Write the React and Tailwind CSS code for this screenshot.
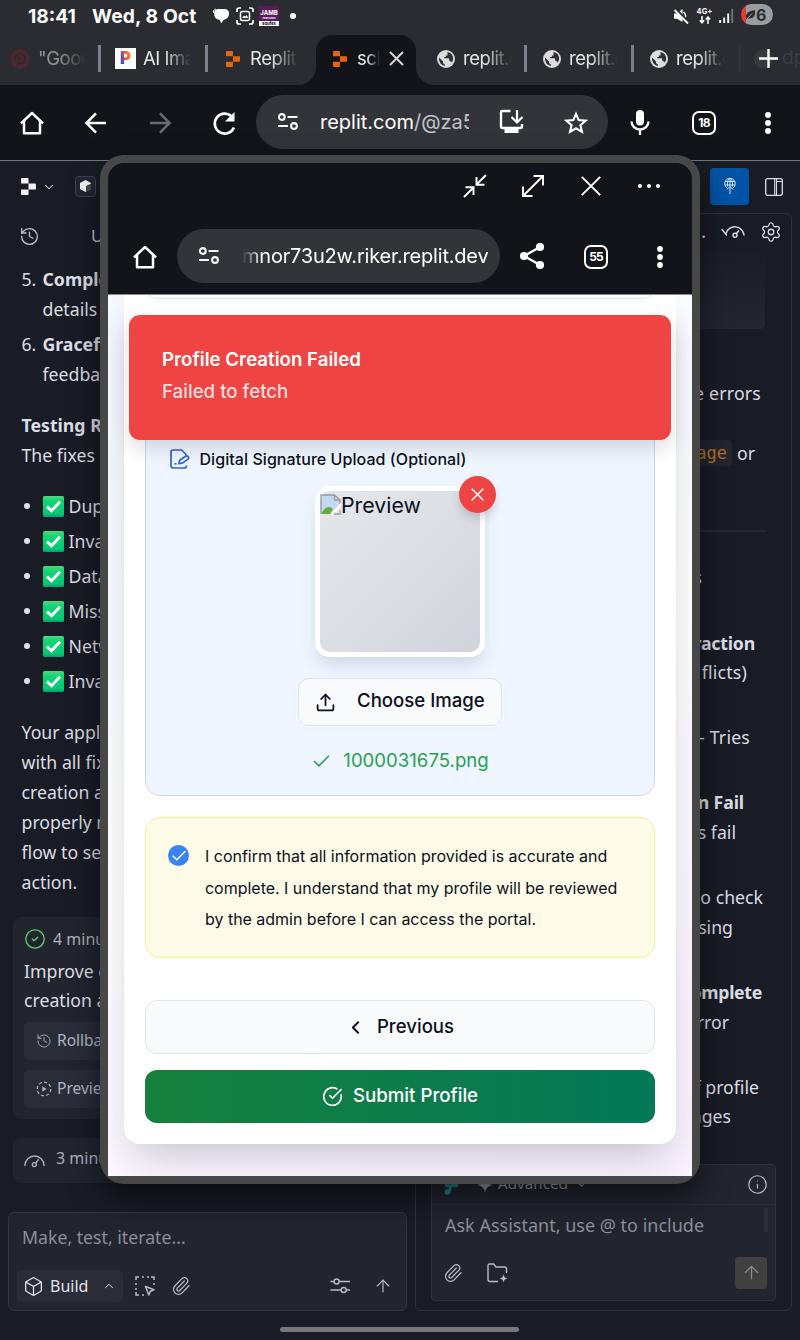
import React from "react";
import {
  History, Check, ChevronDown, ChevronUp, ChevronLeft, Paperclip, ArrowUp, Settings,
  X, Info, Upload, CircleCheckBig, CircleCheck, Box,
} from "lucide-react";
import { FaPinterest } from "react-icons/fa";

/* ---------- icons ---------- */
function Svg({ w, h, vb, className = "", children }) {
  return (
    <svg width={w} height={h} viewBox={vb || `0 0 ${w} ${h}`} fill="none" className={`shrink-0 ${className}`}>
      {children}
    </svg>
  );
}

const HomeIcon = () => (
  <Svg w={26} h={26}>
    <path d="M2 13.4 13 3l11 10.4M5 11v12.2h16V11" stroke="#fff" strokeWidth="2.5" strokeLinejoin="round" />
  </Svg>
);
const TuneIcon = () => (
  <Svg w={22} h={20}>
    <g stroke="#f4f4f6" strokeWidth="2.1">
      <circle cx="4.8" cy="5" r="2.9" />
      <path d="M10.5 5h10M1 14h10" />
      <circle cx="17" cy="14" r="2.9" />
    </g>
  </Svg>
);
const DotsV = () => (
  <Svg w={8} h={26}>
    <circle cx="4" cy="5" r="2.9" fill="#fff" />
    <circle cx="4" cy="13" r="2.9" fill="#fff" />
    <circle cx="4" cy="21" r="2.9" fill="#fff" />
  </Svg>
);
const Arrow = ({ flip, color }) => (
  <Svg w={24} h={24}>
    <path
      d={flip ? "M2 12h19M12 2.3 21.6 12 12 21.7" : "M22 12H3M12 2.3 2.4 12 12 21.7"}
      stroke={color}
      strokeWidth="2.5"
    />
  </Svg>
);
const ReloadIcon = () => (
  <Svg w={26} h={26}>
    <path d="M23 17.5A10 10 0 1 1 20.5 6.2" stroke="#fff" strokeWidth="2.6" />
    <path d="M23.5 2v9.5H14z" fill="#fff" />
  </Svg>
);
const TabCount = ({ n }) => (
  <div className="flex h-[24px] w-[24px] items-center justify-center rounded-[7px] border-[2.4px] border-white pt-px text-[12px] font-bold leading-none tracking-[-0.8px] text-white">
    {n}
  </div>
);
const ReplitMark = ({ color, w = 14, h = 16 }) => (
  <Svg w={w} h={h} vb="0 0 14 16">
    <path
      d="M0 .8Q0 0 .8 0H6.2Q7 0 7 .8V5.2H0zM7 5.2H13.2Q14 5.2 14 6V10Q14 10.8 13.2 10.8H7zM0 10.8H7V15.2Q7 16 6.2 16H.8Q0 16 0 15.2z"
      fill={color}
    />
  </Svg>
);
const Globe = () => (
  <Svg w={18} h={18}>
    <circle cx="9" cy="9" r="9" fill="#dcdcde" />
    <path
      d="M10.500 1.900q2.500.300 4.200 2.300 1.700 2.200 1.400 5-.300 2-1.300 3.400-.800-1.800-2.300-1.700l-.700-2.600H7.200V7h1.600V5.400h1.700zM2 7.600l4 4v1.200q.300 1.300 1.800 1.500v1.700q-2.900-.500-4.600-2.900Q1.500 10.600 2 7.600z"
      fill="#2f3136"
    />
  </Svg>
);
const GaugeIcon = () => (
  <Svg w={21} h={14}>
    <g stroke="currentColor" strokeWidth="1.4" strokeLinecap="round">
      <path d="M1 11.500A9.500 9.500 0 0 1 20 11.500" />
      <circle cx="10.300" cy="10.600" r="2" />
      <path d="M11.700 9.100 14.300 5.800" />
    </g>
  </Svg>
);
const Emoji = () => (
  <Svg w={21} h={21} className="mr-[5px]">
    <defs>
      <linearGradient id="emojiGreen" x1="0" y1="0" x2="0" y2="1">
        <stop offset="0" stopColor="#4fd97a" />
        <stop offset="0.25" stopColor="#10d574" />
        <stop offset="0.85" stopColor="#06c673" />
        <stop offset="1" stopColor="#079b78" />
      </linearGradient>
    </defs>
    <rect width="21" height="21" rx="1.500" fill="url(#emojiGreen)" />
    <path d="M4 10.700 8.500 14.700 17 5.700" stroke="#fff" strokeWidth="2.900" />
  </Svg>
);
const FadeText = ({ children, className = "" }) => (
  <span
    className={`mb-[2px] overflow-hidden whitespace-nowrap text-[18.5px] leading-[26px] tracking-[-0.45px] text-[#e4e4e6] [mask-image:linear-gradient(to_right,black_45%,transparent)] ${className}`}
  >
    {children}
  </span>
);
const TabDivider = ({ className = "bg-[#7d808c]" }) => <div className={`h-[27px] w-[3px] shrink-0 ${className}`} />;

/* ---------- phone browser chrome ---------- */
function StatusBar() {
  return (
    <div className="flex h-[35px] items-center bg-[#2b2c31] pb-[3px] pl-[28px] pr-[27px] text-white">
      <span className="w-[64px] whitespace-nowrap text-[19.3px] font-bold">18:41</span>
      <span className="w-[121px] whitespace-nowrap text-[19.3px] font-bold tracking-[0.1px]">Wed, 8 Oct</span>
      <Svg w={17} h={16}>
        <path d="M5 1h7q4 .5 4 4.500 0 5-5.500 6.500L8 15.500 7 12Q1 11 1 5.500 1 1.500 5 1z" fill="#fff" />
        <path d="M.500 5V2.500L3 .800" stroke="#fff" />
      </Svg>
      <Svg w={18} h={18} className="ml-[6px]">
        <path d="M1 5V3q0-2 2-2h2M13 1h2q2 0 2 2v2M17 13v2q0 2-2 2h-2M5 17H3q-2 0-2-2v-2" stroke="#fff" strokeWidth="1.700" />
        <rect x="4.500" y="4.500" width="9" height="9" rx="2" stroke="#fff" strokeWidth="1.500" />
        <path d="m6 11 2-2.500 1.500 1 1-1.500 1.800 3z" fill="#fff" />
      </Svg>
      <div className="ml-[5px] flex h-[20px] w-[20px] shrink-0 flex-col items-center bg-[#5a1d5c] pt-[4px] font-bold leading-none">
        <span className="text-[6px] leading-[6px]">JAMB</span>
        <span className="text-[2.5px] leading-[5px]">PREPARED</span>
        <span className="h-[5px] w-full bg-white text-center text-[4px] leading-[5px] text-black">Edufex</span>
      </div>
      <div className="ml-[11px] h-[6px] w-[6px] rounded-full bg-white" />
      <div className="flex-1" />
      <Svg w={17} h={17}>
        <path d="M1 5.500h3L9.500 1v13L4 10.800H1z" fill="#fff" />
        <path d="M10.500 4q3 2.500 1.500 6" stroke="#fff" strokeWidth="1.600" />
        <path d="M2.500 1 16 14.500" stroke="#2b2c31" strokeWidth="2.500" />
        <path d="M1.500 2 15 15.500" stroke="#fff" strokeWidth="1.800" />
      </Svg>
      <div className="ml-[6px] mr-[6px] flex w-[17px] flex-col items-center">
        <span className="text-[7.5px] font-bold leading-[8px]">4G+</span>
        <Svg w={12} h={8}>
          <path d="M3 0v6.500M.800 4.300 3 6.800l2.200-2.500M9 8V1M6.800 3.500 9 1l2.200 2.500" stroke="#fff" strokeWidth="1.500" />
        </Svg>
      </div>
      <Svg w={15} h={16}>
        <path d="M1.200 12v3M5.200 9.500V15M9.200 5.500V15" stroke="#fff" strokeWidth="1.900" />
        <path d="M13.200 1v14" stroke="#6f7075" strokeWidth="1.900" />
      </Svg>
      <div className="mb-[3px] ml-[7px] flex h-[21px] w-[32px] items-center overflow-hidden rounded-full bg-[linear-gradient(90deg,#e23b30_5px,#9b9c9f_5px)] pl-[4px]">
        <Svg w={11} h={11}>
          <path d="M1 9Q0 2 10 1q1 9-6 8.500L1 10.500" fill="#2c2d31" />
          <path d="M2 10 7 4.500" stroke="#9b9c9f" />
        </Svg>
        <span className="text-[16px] font-bold leading-none text-[#2c2d31]">6</span>
      </div>
    </div>
  );
}

function TabStrip() {
  return (
    <div className="flex h-[50px] bg-[#131419]">
      <div className="flex w-[316px] items-center rounded-br-[18px] bg-[#2b2c31] pb-[3px]">
        <div className="flex w-[98px] items-center pl-[10px]">
          <FaPinterest size={20} className="shrink-0 text-[#51272f]" />
          <FadeText className="ml-[8px] w-[48px] opacity-55">"Gooc</FadeText>
        </div>
        <TabDivider />
        <div className="flex w-[104px] items-center pl-[14px]">
          <div className="flex h-[21px] w-[21px] items-center justify-center bg-white">
            <span className="bg-[linear-gradient(75deg,#3b4ed0_22%,#e2574a_50%,#f59a2f)] bg-clip-text text-[17px] font-black leading-none text-transparent">
              P
            </span>
          </div>
          <FadeText className="ml-[7px] w-[48px]">AI Ima</FadeText>
        </div>
        <TabDivider />
        <div className="flex items-center pl-[18px]">
          <ReplitMark color="#e8650d" />
          <FadeText className="ml-[10px] w-[48px]">Replit</FadeText>
        </div>
      </div>
      <div className="w-[100px] bg-[#2b2c31]">
        <div className="flex h-full items-center rounded-t-[16px] bg-[#131419] pb-[3px] pl-[17px]">
          <ReplitMark color="#e8650d" />
          <FadeText className="ml-[10px] w-[23px]">scl</FadeText>
          <Svg w={15} h={15} className="ml-[9px]">
            <path d="m1 1 13 13M14 1 1 14" stroke="#d6d6d9" strokeWidth="2" />
          </Svg>
        </div>
      </div>
      <div className="flex flex-1 items-center overflow-hidden rounded-bl-[18px] bg-[#2b2c31] pb-[3px]">
        <div className="flex w-[108px] shrink-0 items-center pl-[21px]">
          <Globe />
          <FadeText className="ml-[8px] w-[49px]">replit.c</FadeText>
        </div>
        <TabDivider />
        <div className="flex w-[104px] shrink-0 items-center pl-[16px]">
          <Globe />
          <FadeText className="ml-[8px] w-[49px]">replit.c</FadeText>
        </div>
        <TabDivider />
        <div className="flex w-[104px] shrink-0 items-center pl-[16px]">
          <Globe />
          <FadeText className="ml-[8px] w-[49px]">replit.c</FadeText>
        </div>
        <TabDivider className="bg-[#323339]" />
        <div className="flex items-center pl-[13px]">
          <div className="flex h-[20px] w-[28px] items-center justify-center rounded-full bg-[radial-gradient(circle_at_9px_10px,#37383d_9px,transparent_10px)]">
            <Svg w={19} h={19}>
              <path d="M9.500 0v19M0 9.500h19" stroke="#fff" strokeWidth="2.400" />
            </Svg>
          </div>
          <span className="whitespace-nowrap text-[19px] text-[#3d3e43]">dp</span>
        </div>
      </div>
    </div>
  );
}

function MainToolbar() {
  return (
    <div className="flex h-[76px] items-center border-b border-[#77787d] bg-[#131419] text-white">
      {[<HomeIcon />, <Arrow color="#fff" />, <Arrow flip color="#6a6b70" />, <ReloadIcon />].map((ic, i) => (
        <div key={i} className="flex w-[64px] justify-center">{ic}</div>
      ))}
      <div className="mt-[-2px] flex h-[54px] w-[352px] items-center rounded-full bg-[#333439] pl-[21px]">
        <TuneIcon />
        <span className="ml-[21px] w-[149px] overflow-hidden whitespace-nowrap text-[20px]">
          replit.com<span className="text-[#c3c2cd]">/@za5</span>
        </span>
        <Svg w={25} h={26} className="ml-[30px]">
          <path d="M11.500 2H3.200Q2 2 2 3.200v14.600Q2 19 3.200 19h18.600Q23 19 23 17.800V15" stroke="#fff" strokeWidth="2.400" />
          <path d="M5.500 19.500h14V24h-14z" fill="#fff" />
          <path d="M18 1v12M12.500 8l5.500 5.500L23.500 8" stroke="#fff" strokeWidth="2.200" />
        </Svg>
        <Svg w={24} h={24} className="ml-[40px] mt-[2px]">
          <path
            d="m12 2.800 2.700 6.300 6.900.6-5.200 4.500 1.600 6.700-6-3.600-6 3.600 1.600-6.700L2.400 9.700l6.900-.6z"
            stroke="#fff"
            strokeWidth="2.100"
          />
        </Svg>
      </div>
      <div className="flex w-[64px] justify-center">
        <Svg w={20} h={27}>
          <rect x="6" y="1" width="8" height="15.500" rx="4" fill="#fff" />
          <path d="M1.500 12.500a8.500 8 0 0 0 17 0M10 20.500V26" stroke="#fff" strokeWidth="2.300" />
        </Svg>
      </div>
      <div className="flex w-[64px] justify-center"><TabCount n="18" /></div>
      <div className="flex w-[64px] justify-center"><DotsV /></div>
    </div>
  );
}

/* ---------- workspace behind the window ---------- */
function CheckItem({ children }) {
  return (
    <li className="flex h-[30px] items-center whitespace-nowrap">
      <span className="ml-[2px] mr-[13px] h-[6px] w-[6px] rounded-full bg-[#dfe1e8]" />
      <Emoji />
      {children}
    </li>
  );
}

function AgentPane() {
  return (
    <div className="flex w-[415px] flex-col text-[#dcdee6]">
      <div className="flex h-[50px] items-center pl-[21px]">
        <ReplitMark color="#f0f1f4" w={15} h={17} />
        <ChevronDown size={14} strokeWidth={1.800} className="ml-[6px] mt-[2px]" />
        <div className="ml-[19px] flex h-[21px] w-[21px] items-center justify-center rounded-[4px] border border-[#40434f] bg-[#23262f]">
          <Svg w={11} h={12}>
            <path d="M5.500 0 11 3v6L5.500 12 0 9V3z" fill="#f3f4f4" />
            <path d="M6 6 11 3.500V9L6 12z" fill="#3e5248" />
          </Svg>
        </div>
      </div>
      <div className="flex h-[50px] items-center pl-[19px] text-[#bfc2cc]">
        <History size={21} strokeWidth={1.500} />
        <span className="ml-[51px] text-[17px]">U</span>
      </div>
      <div className="mt-[3px] flex flex-col pl-[21.500px] text-[17.700px] leading-[30px]">
        <ol className="flex flex-col gap-[5px]">
          <li className="flex">
            <span className="w-[21px]">5.</span>
            <div><b className="font-bold">Comple</b><br />details</div>
          </li>
          <li className="flex">
            <span className="w-[21px]">6.</span>
            <div><b className="font-bold">Graceful</b><br />feedback</div>
          </li>
        </ol>
        <p className="mt-[21px] whitespace-nowrap"><b>Testing Re</b><br />The fixes</p>
        <ul className="mt-[21px] flex flex-col gap-[5px]">
          <CheckItem>Dupl</CheckItem>
          <CheckItem>Inval</CheckItem>
          <CheckItem>Data</CheckItem>
          <CheckItem>Missi</CheckItem>
          <CheckItem>Netw</CheckItem>
          <CheckItem>Inval</CheckItem>
        </ul>
        <p className="mt-[22px] whitespace-nowrap leading-[29.900px]">
          Your appli<br />with all fix<br />creation an<br />properly m<br />flow to sen<br />action.
        </p>
      </div>
      <div className="ml-[13px] mt-[19.600px] flex h-[202px] w-[394px] flex-col rounded-[8px] bg-[#22252e] px-[11px] pt-[11px]">
        <div className="flex h-[22px] items-center text-[16px] text-[#adb0bb]">
          <CircleCheck size={22} strokeWidth={1.500} className="mr-[7px] text-[#62c876]" />4 minut
        </div>
        <p className="mt-[7px] whitespace-nowrap text-[17.700px] leading-[29px]">Improve er<br />creation an</p>
        <div className="mt-[7px] flex h-[38px] items-center rounded-[5px] bg-[#2a2d38] pl-[12px] text-[15.500px] text-[#b2b5c0]">
          <History size={16} strokeWidth={1.400} strokeDasharray="5 1.500" className="mr-[5px]" />Rollbac
        </div>
        <div className="mt-[10px] flex h-[38px] items-center rounded-[5px] bg-[#2a2d38] pl-[12px] text-[15.500px] text-[#b2b5c0]">
          <Svg w={16} h={16} className="mr-[5px]">
            <circle cx="8" cy="8" r="6.800" stroke="currentColor" strokeWidth="1.200" strokeDasharray="3.200 2.100" />
            <path d="M6.300 5.300v5.400L10.500 8z" fill="currentColor" />
          </Svg>
          Preview
        </div>
      </div>
      <div className="ml-[13px] mt-[19px] flex h-[45px] w-[394px] items-center rounded-[8px] bg-[#22252e] pb-[5px] pl-[11px] text-[16px] text-[#adb0bb]">
        <span className="mr-[11px] mt-[5px]"><GaugeIcon /></span>3 minut
      </div>
      <div className="ml-[8px] mt-[29px] flex h-[99px] w-[399px] flex-col rounded-[6px] border border-[#343743] bg-[#22252e]">
        <p className="ml-[13px] mt-[11px] text-[17.700px] leading-[26px] text-[#8b8e9b]">Make, test, iterate...</p>
        <div className="mt-[20px] flex h-[32px] items-center text-[#b9bcc7]">
          <div className="ml-[8px] flex h-[32px] w-[106px] items-center rounded-[5px] bg-[#2a2d38] pl-[6px] text-[16px] text-[#e0e2e9]">
            <Box size={21} strokeWidth={1.500} className="mr-[6px]" />
            <span className="mb-px w-[52px]">Build</span>
            <ChevronUp size={14} strokeWidth={1.700} />
          </div>
          <Svg w={20} h={20} className="ml-[12px]">
            <path d="M1 4V1h3M7 1h2M12 1h2M16 1h3v3M19 7v2M1 7v2M1 12v2M1 16v3h3M7 19h2" stroke="currentColor" strokeWidth="1.500" />
            <path d="m10.500 10.500 8.500 3.300-3.700 1.500-1.500 3.700z" stroke="currentColor" strokeWidth="1.500" strokeLinejoin="round" />
          </Svg>
          <Paperclip size={20} strokeWidth={1.500} className="ml-[16px]" />
          <Svg w={20} h={18} className="ml-[139px]">
            <g stroke="currentColor" strokeWidth="1.400">
              <path d="M.500 4.500h3.800M9 4.500h11M.500 13h11M16 13h4" />
              <circle cx="6.600" cy="4.500" r="2.500" />
              <circle cx="13.700" cy="13" r="2.500" />
            </g>
          </Svg>
          <ArrowUp size={20} strokeWidth={1.400} className="ml-[23px]" />
        </div>
      </div>
    </div>
  );
}

function AssistantPane() {
  return (
    <div className="flex w-[385px] flex-col text-[#dcdee6]">
      <div className="flex h-[52px] items-center justify-end pr-[17px]">
        <div className="mb-[2px] flex h-[37px] w-[39px] items-center justify-center rounded-[4px] bg-[#0053a6]">
          <Svg w={14} h={18}>
            <g stroke="#d2e4f7" strokeWidth="1">
              <path d="M4.500 11.300A5.300 5.300 0 1 1 9.500 11.300" />
              <path d="M2 4.500h10M2 8h10M4.500 9.500V6q0-3 2.500-5 2.500 2 2.500 5v3.500M7 1v16M4 12.500l3-3 3 3" />
            </g>
          </Svg>
        </div>
        <Svg w={18} h={18} className="mb-px ml-[16px]">
          <rect x=".700" y=".700" width="16.600" height="16.600" rx="2" stroke="#dcdee6" strokeWidth="1.300" />
          <path d="M9.700 1v16M11.500 1v16M11.500 3.500h5.500" stroke="#dcdee6" strokeWidth="1.100" />
        </Svg>
      </div>
      <div className="flex h-[1098px] w-[377px] flex-col items-end rounded-[6px] border border-[#2f323d] pr-[16px] text-[17.700px] leading-[30px]">
        <div className="mr-[-7px] flex h-[38px] items-center gap-[15px] pb-[2px]">
          <span className="mb-[2px]">.</span>
          <Svg w={24} h={14}>
            <g stroke="currentColor" strokeWidth="1.400" strokeLinecap="round">
              <path d="M1 4.500l4.500 5.500M5 8.500A9.200 9.200 0 0 1 23 10" />
              <circle cx="14" cy="10.300" r="2" />
              <path d="M15.300 8.800 17.500 6" />
            </g>
          </Svg>
          <Settings size={22} strokeWidth={1.400} />
        </div>
        <div className="mr-[10px] h-[77px] w-[300px] rounded-[5px] bg-linear-to-b from-[#1b1d26] to-[#242630]" />
        <p className="mr-[14px] mt-[49px] tracking-[0.2px]">e errors</p>
        <p className="mr-[20px] mt-[30px] flex items-center">
          <code className="mr-[5px] flex h-[26px] items-center rounded-[4px] bg-[#24262f] px-[5px] font-['DejaVu_Sans_Mono',monospace] text-[17px] text-[#b5702c]">age</code>or
        </p>
        <hr className="mr-[10px] mt-[62px] h-[2px] w-[300px] border-0 bg-[#272a34]" />
        <p className="mr-[73px] mt-[30px]">s</p>
        <p className="mr-[20px] mt-[36px] font-bold tracking-[-0.2px]">raction</p>
        <p className="mr-[28px] mt-[-1px] tracking-[0.2px]">flicts)</p>
        <p className="mr-[25px] mt-[35px] tracking-[0.2px]">- Tries</p>
        <p className="mr-[31px] mt-[35px] font-bold tracking-[-0.1px]">n Fail</p>
        <p className="mr-[39px]">s fail</p>
        <p className="mr-[12px] mt-[35px]">o check</p>
        <p className="mr-[42px]">sing</p>
        <p className="mr-[13px] mt-[35px] font-bold tracking-[-0.3px]">omplete</p>
        <p className="mr-[46px]">rror</p>
        <p className="mr-[16px] mt-[35px]">f profile</p>
        <p className="mr-[44px] mt-[-1px]">nges</p>
        <div className="mr-[-1px] mt-[33px] flex h-[137px] w-[345px] shrink-0 flex-col rounded-[4px] border border-[#2f323d] bg-[#22252e]">
          <div className="flex h-[40px] items-center border-b border-[#2c2f3a] pl-[12px] pr-[7px] text-[#9c9fab]">
            <Svg w={16} h={20}>
              <path d="M3 16.500Q6 16 6 13.500T9 10l4-2" stroke="#268292" strokeWidth="3.200" strokeLinecap="round" />
              <circle cx="3.200" cy="10" r="2.400" fill="#268292" />
              <circle cx="3.500" cy="16.800" r="2.900" fill="#268292" />
              <circle cx="11.500" cy="9.500" r="2.900" fill="#268292" />
            </Svg>
            <Svg w={16} h={16} className="ml-[17px]">
              <path d="M8 0q.600 7.200 8 8-7.400.800-8 8-.600-7.200-8-8 7.400-.800 8-8z" fill="currentColor" />
            </Svg>
            <span className="mb-[3px] ml-[5px] text-[15.200px]">Advanced</span>
            <ChevronDown size={13} className="ml-[7px]" />
            <Info size={21} strokeWidth={1.400} className="ml-auto text-[#b9bcc7]" />
          </div>
          <div className="flex h-[43px] overflow-hidden pl-[13px]">
            <p className="w-[280px] pt-[6px] text-[18px] leading-[29.500px] text-[#8b8e9b]">
              Ask Assistant, use @ to include specific files
            </p>
            <div className="ml-[39px] mt-[3px] h-[24px] w-[4px] bg-[#2d303b]" />
          </div>
          <div className="flex flex-1 items-center pb-[3px] pl-[11px] pr-[8px] text-[#b9bcc7]">
            <Paperclip size={20} strokeWidth={1.500} />
            <Svg w={21} h={20} className="ml-[24px]">
              <path d="M11 18.500H3Q1 18.500 1 16.500V2.500Q1 1 2.500 1H6.500L9 4h8.500Q19.500 4 19.500 6v4" stroke="currentColor" strokeWidth="1.400" />
              <path d="M16.500 11q.400 4 4 4.500-3.600.500-4 4-.400-3.500-4-4 3.600-.500 4-4.500z" fill="currentColor" />
            </Svg>
            <div className="ml-auto flex h-[32px] w-[32px] items-center justify-center rounded-[4px] bg-[#404041] text-[#8b8b8c]">
              <ArrowUp size={21} strokeWidth={1.500} />
            </div>
          </div>
        </div>
      </div>
    </div>
  );
}

/* ---------- floating browser window ---------- */
function WindowChrome() {
  return (
    <div className="rounded-t-[16px] border-b border-[#8a8b92] bg-[#131419] text-white">
      <div className="flex h-[46px] items-center justify-end pr-[14px]">
        <div className="flex w-[58px] justify-center">
          <Svg w={24} h={24}>
            <path d="M23 1 13.500 10.500M13.500 3v7.700h8M1 23l9.500-9.500M10.500 21v-7.700h-8" stroke="#fff" strokeWidth="1.900" />
          </Svg>
        </div>
        <div className="flex w-[58px] justify-center">
          <Svg w={24} h={24}>
            <path d="M2.500 21.500 21.500 2.500M12.500 2h9.500v9.500M2 12.500V22h9.500" stroke="#fff" strokeWidth="1.900" />
          </Svg>
        </div>
        <div className="flex w-[58px] justify-center">
          <Svg w={20} h={20}>
            <path d="M.800.800 19.200 19.200M19.200.800.800 19.200" stroke="#fff" strokeWidth="1.900" />
          </Svg>
        </div>
        <div className="flex w-[58px] justify-center gap-[4.500px]">
          <i className="h-[4.500px] w-[4.500px] rounded-full bg-white" />
          <i className="h-[4.500px] w-[4.500px] rounded-full bg-white" />
          <i className="h-[4.500px] w-[4.500px] rounded-full bg-white" />
        </div>
      </div>
      <div className="flex h-[85px] items-center pt-[10px] pb-[1px]">
        <div className="ml-[5px] flex w-[64px] justify-center pt-[2px]"><HomeIcon /></div>
        <div className="mb-[1px] flex h-[54px] w-[323px] items-center rounded-full bg-[#333439] pl-[21px]">
          <TuneIcon />
          <span className="ml-[22px] whitespace-nowrap text-[20px] tracking-[-0.2px] [mask-image:linear-gradient(to_right,transparent,black_20px)]">
            mnor73u2w.riker.replit.dev
          </span>
        </div>
        <div className="flex w-[64px] justify-center">
          <Svg w={26} h={28}>
            <path d="M21 5 5 14l16 9" stroke="#fff" strokeWidth="2.400" />
            <circle cx="21" cy="5" r="4.100" fill="#fff" />
            <circle cx="5" cy="14" r="4.100" fill="#fff" />
            <circle cx="21" cy="23" r="4.100" fill="#fff" />
          </Svg>
        </div>
        <div className="flex w-[64px] justify-center pt-px"><TabCount n="55" /></div>
        <div className="flex w-[64px] justify-center pt-px"><DotsV /></div>
      </div>
    </div>
  );
}

function SignatureUpload() {
  return (
    <section className="mt-[16px] flex h-[481px] shrink-0 flex-col items-center rounded-[15px] border border-[#c3daf0] bg-[#eff6ff]">
      <div className="mt-[131px] flex h-[24px] items-center self-start pl-[24px] text-[16px] font-medium tracking-[0.060px] text-[#0b1020]">
        <Svg w={20} h={20} className="mr-[9.500px]">
          <g stroke="#2f62dc" strokeWidth="1.700">
            <path d="M16.500 16.500Q16.500 19 14.500 19H3.500Q1 19 1 17V3Q1 1 3 1h8.500L15.800 5v1.500" />
            <path d="m9 14.500.700-3.200 5.800-4.100q1.800-.700 2.800.700.700 1.500-.500 2.500l-5.500 3.800z" />
            <path d="M4.500 14.800h2" />
          </g>
        </Svg>
        Digital Signature Upload (Optional)
      </div>
      <div className="relative mt-[15px] h-[171px] w-[170px] rounded-[15px] border-[5px] border-white bg-linear-to-br from-[#e5e7eb] to-[#d1d5db] shadow-[0_10px_18px_-3px_rgba(30,50,90,0.16)]">
        <div className="flex h-[30px] items-center text-[21.300px] text-[#0b1020]">
          <Svg w={21} h={21} className="mb-[3px]">
            <path d="M1 1h14l5 5v5l-8 9H1z" fill="#c5d6f2" />
            <path d="M1 20q6-11 12-5l-3 5z" fill="#5fae3a" />
            <path d="M12 20h8V10z" fill="#e9f2e4" />
            <path d="M20 6v5M1 20V1h13.500L20 6h-5.500V1M14 20h6v-4" stroke="#9b9b9b" strokeWidth="1.300" />
            <path d="M11 21 21 10" stroke="#fff" strokeWidth="2" />
          </Svg>
          Preview
        </div>
        <button className="absolute left-[139px] top-[-15px] flex h-[37px] w-[37px] items-center justify-center rounded-full bg-[#ef4444] shadow-[0_6px_12px_-2px_rgba(0,0,0,0.2)]">
          <X size={21} strokeWidth={1.900} color="#fff" />
        </button>
      </div>
      <button className="mt-[21px] flex h-[48px] w-[204px] shrink-0 items-center rounded-[11px] border border-[#dfe6f0] bg-[#f8fafc] pb-[2px] pl-[16px] text-[18.600px] font-medium text-[#0b1020]">
        <Upload size={21} strokeWidth={2} className="mr-[21px] mt-[2px]" />
        Choose Image
      </button>
      <div className="mt-[22px] flex h-[26px] items-center text-[18.600px] text-[#27a152]">
        <Check size={21} strokeWidth={1.800} className="mr-[11px]" />
        1000031675.png
      </div>
    </section>
  );
}

function ProfileForm() {
  return (
    <main className="h-[881px] overflow-hidden bg-[linear-gradient(155deg,#f5f9ff_0%,#fff_50%,#faf2ff_100%)] px-[16px]">
      <div className="flex h-[849px] flex-col rounded-b-[16px] bg-white px-[21px] shadow-[0_20px_40px_-8px_rgba(20,20,35,0.22)]">
        <div className="mt-[-26px] h-[30px] shrink-0 rounded-b-[12px] border border-[#e2e6ec] bg-[#fbfcfd]" />
        <SignatureUpload />
        <section className="mt-[21px] flex h-[141px] shrink-0 rounded-[15px] border border-[#f8ee95] bg-[#fefce8] pl-[22px] pt-[23px]">
          <div className="mt-[4px] flex h-[21px] w-[21px] shrink-0 items-center justify-center rounded-full bg-[#3b82f6]">
            <Check size={18} strokeWidth={1.900} color="#fff" />
          </div>
          <p className="ml-[16px] whitespace-nowrap text-[16px] leading-[31.700px] tracking-[-0.020px] text-[#0b1020]">
            I confirm that all information provided is accurate and<br />
            complete. I understand that my profile will be reviewed<br />
            by the admin before I can access the portal.
          </p>
        </section>
        <button className="mt-[42px] flex h-[54px] w-full shrink-0 items-center justify-center rounded-[12px] border border-[#e2e6ee] bg-[#f8fafc] pr-px text-[18.600px] font-medium text-[#0b1020]">
          <ChevronLeft size={21} strokeWidth={2.200} className="mr-[11px]" />
          Previous
        </button>
        <button className="mt-[16px] flex h-[53px] w-full shrink-0 items-center justify-center rounded-[12px] bg-linear-to-r from-[#15803d] to-[#047857] pb-px text-[18.700px] font-medium text-white">
          <CircleCheckBig size={21} strokeWidth={1.900} className="mr-[10px]" />
          Submit Profile
        </button>
      </div>
    </main>
  );
}

export default function App() {
  return (
    <div className="relative h-[1340px] w-[800px] overflow-hidden bg-[#1a1c25] font-['Inter',sans-serif]">
      <StatusBar />
      <TabStrip />
      <MainToolbar />
      <div className="flex h-[1166px] font-['Noto_Sans',sans-serif]">
        <AgentPane />
        <AssistantPane />
      </div>
      <div className="ml-[280px] h-[5px] w-[239px] rounded-full bg-[#77777a]" />

      <div className="absolute left-[100px] top-[155px] h-[1029px] w-[600px] rounded-[24px] border-[8px] border-[#474747] bg-[#474747] shadow-[0_14px_30px_rgba(0,0,0,0.55)]">
        <WindowChrome />
        <ProfileForm />
        <div className="absolute left-[21px] top-[152px] flex h-[125px] w-[542px] flex-col justify-center rounded-[11px] bg-[#ef4444] pb-[3px] pl-[33px] text-[18.700px] leading-[32px] text-white shadow-[0_8px_20px_rgba(0,0,0,0.14)]">
          <strong className="font-semibold">Profile Creation Failed</strong>
          <span className="font-medium text-[#fcdede]">Failed to fetch</span>
        </div>
      </div>
    </div>
  );
}
